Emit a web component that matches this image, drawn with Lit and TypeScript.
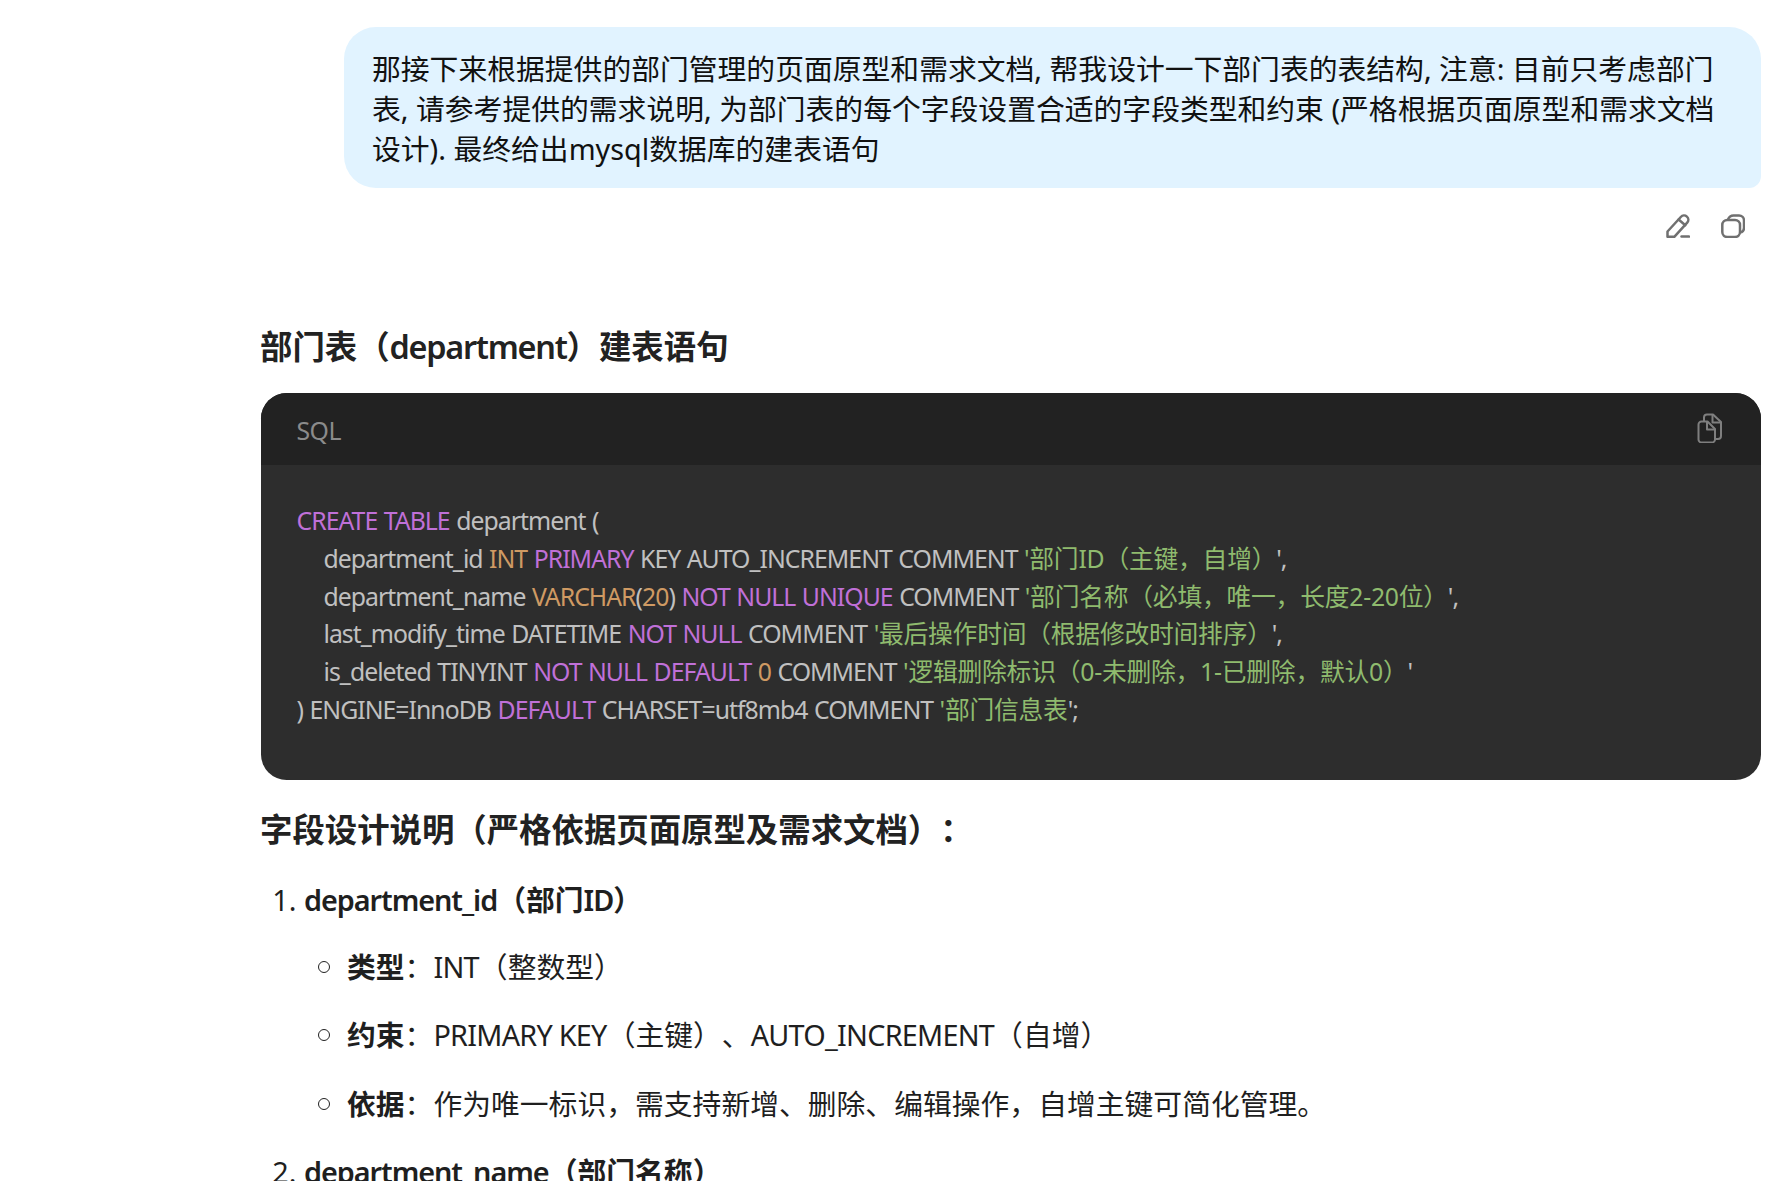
import { LitElement, html, css } from "lit";
import { customElement } from "lit/decorators.js";

@customElement("app-root")
export class AppRoot extends LitElement {
  static styles = css`
    :host {
      display: block;
      height: 1181px;
      overflow: hidden;
      background: #fff;
      color: #1f1f1f;
      font-family: "Noto Sans", "Noto Sans CJK SC", sans-serif;
      font-size: 28.8px;
      text-spacing-trim: space-all;
    }
    .page { padding: 27px 21px 0 261px; }
    .bubble {
      margin-left: 83px;
      height: 161px;
      box-sizing: border-box;
      padding: 22px 28px;
      background: #e1f3ff;
      border-radius: 32px 32px 12px 32px;
      line-height: 40px;
      color: #111;
    }
    .actions {
      display: flex;
      justify-content: flex-end;
      gap: 31px;
      padding: 26px 16px 0 0;
      height: 24px;
    }
    .actions svg { width: 24px; height: 24px; display: block; }
    h3 {
      margin: 0 0 0 -1px;
      font-size: 32.4px;
      line-height: 48px;
      font-weight: 700;
      color: #222;
    }
    .h1 { margin-top: 84px; }
    .h1 .lb { letter-spacing: -1.25px; }
    .code {
      margin-top: 23px;
      height: 387px;
      border-radius: 25.6px;
      overflow: hidden;
      background: #2d2d2d;
    }
    .code-head {
      height: 72px;
      box-sizing: border-box;
      padding: 2px 35.5px 0;
      background: #222;
      display: flex;
      align-items: center;
      justify-content: space-between;
      color: #8b8b8b;
      font-size: 24.8px;
      letter-spacing: -0.5px;
    }
    .code-head svg { width: 26px; height: 30px; display: block; margin-right: 3px; margin-top: -5px; }
    .code-body {
      padding: 37px 35.5px;
      font-size: 24.8px;
      line-height: 37.8px;
      color: #c0c0c0;
      white-space: pre;
      letter-spacing: -0.97px;
      word-spacing: 1px;
    }
    .in { padding-left: 27px; }
    .k { color: #c070d8; }
    .t { color: #cf9a63; }
    .s { color: #8fbb6e; letter-spacing: -0.25px; }
    .h2 { margin-top: 25px; }
    ol { margin: 24px 0 0; padding: 0 0 0 43px; }
    ol > li { line-height: 46px; margin-bottom: 18px; }
    ul { margin: 21px 0 0; padding: 0 0 0 43px; list-style: none; }
    ul li { margin-bottom: 22px; position: relative; }
    ul li:nth-child(2) { margin-bottom: 23px; }
    ul li::before {
      content: "";
      position: absolute;
      left: -29px;
      top: 17px;
      width: 12px;
      height: 12px;
      box-sizing: border-box;
      border: 1.6px solid #222;
      border-radius: 50%;
    }
    b { font-weight: 700; }
    .l { letter-spacing: -0.75px; }
    .lb { font-weight: 600; letter-spacing: -1.05px; }
  `;

  render() {
    return html`<div class="page">
      <div class="bubble">那接下来根据提供的部门管理的页面原型和需求文档, 帮我设计一下部门表的表结构, 注意: 目前只考虑部门表, 请参考提供的需求说明, 为部门表的每个字段设置合适的字段类型和约束 (严格根据页面原型和需求文档设计). 最终给出mysql数据库的建表语句</div>
      <div class="actions">
        <svg viewBox="0 0 24 24" fill="none" stroke="#707070" stroke-width="2.5" stroke-linejoin="round" stroke-linecap="round"><path d="M1.500 22.800V17.500L14.800 3c1.700-1.900 4.300-2 6.100-.4 1.800 1.600 1.900 4.200.3 6L8.300 22.800z"/><path d="M12.600 5.500l6.700 5.800"/><path d="M15.500 22.600h7.500"/></svg>
        <svg viewBox="0 0 24 24" fill="none" stroke="#707070" stroke-width="2.5"><rect x="1.300" y="6" width="17.700" height="17" rx="5"/><path d="M7 5.500C8 2.900 10 1.500 12.500 1.500H18a5 5 0 0 1 5 5V14c0 2-1 3.600-3 4.500"/></svg>
      </div>
      <h3 class="h1">部门表（<span class="lb">department</span>）建表语句</h3>
      <div class="code">
        <div class="code-head"><span>SQL</span>
          <svg viewBox="0 0 26 30" fill="none" stroke="#7f7f7f" stroke-width="2" stroke-linejoin="round"><path d="M7 9V4.500A3 3 0 0 1 10 1.500h6l8 7.500v14a3 3 0 0 1-3 3h-3"/><path d="M15.500 2v7.500H24"/><path d="M1.500 11.500a3 3 0 0 1 3-3h6l7.500 7.500v10.500a3 3 0 0 1-3 3h-10.500a3 3 0 0 1-3-3z"/><path d="M10 9v7.500h8"/></svg>
        </div>
        <div class="code-body"><div><span class="k">CREATE TABLE</span> department (</div><div class="in">department_id <span class="t">INT</span> <span class="k">PRIMARY</span> KEY AUTO_INCREMENT COMMENT <span class="s">'部门ID（主键，自增）</span>',</div><div class="in">department_name <span class="t">VARCHAR</span>(<span class="t">20</span>) <span class="k">NOT NULL UNIQUE</span> COMMENT <span class="s">'部门名称（必填，唯一，长度2-20位）</span>',</div><div class="in">last_modify_time DATETIME <span class="k">NOT NULL</span> COMMENT <span class="s">'最后操作时间（根据修改时间排序）</span>',</div><div class="in">is_deleted TINYINT <span class="k">NOT NULL DEFAULT</span> <span class="t">0</span> COMMENT <span class="s">'逻辑删除标识（0-未删除，1-已删除，默认0）</span>'</div><div>) ENGINE=InnoDB <span class="k">DEFAULT</span> CHARSET=utf8mb4 COMMENT <span class="s">'部门信息表</span>';</div></div>
      </div>
      <h3 class="h2">字段设计说明（严格依据页面原型及需求文档）：</h3>
      <ol>
        <li><b><span class="lb">department_id</span>（部门<span class="lb">ID</span>）</b>
          <ul>
            <li><b>类型</b>：<span class="l">INT</span>（整数型）</li>
            <li><b>约束</b>：<span class="l">PRIMARY KEY</span>（主键）、<span class="l">AUTO_INCREMENT</span>（自增）</li>
            <li><b>依据</b>：作为唯一标识，需支持新增、删除、编辑操作，自增主键可简化管理。</li>
          </ul>
        </li>
        <li><b><span class="lb">department_name</span>（部门名称）</b></li>
      </ol>
    </div>`;
  }
}
